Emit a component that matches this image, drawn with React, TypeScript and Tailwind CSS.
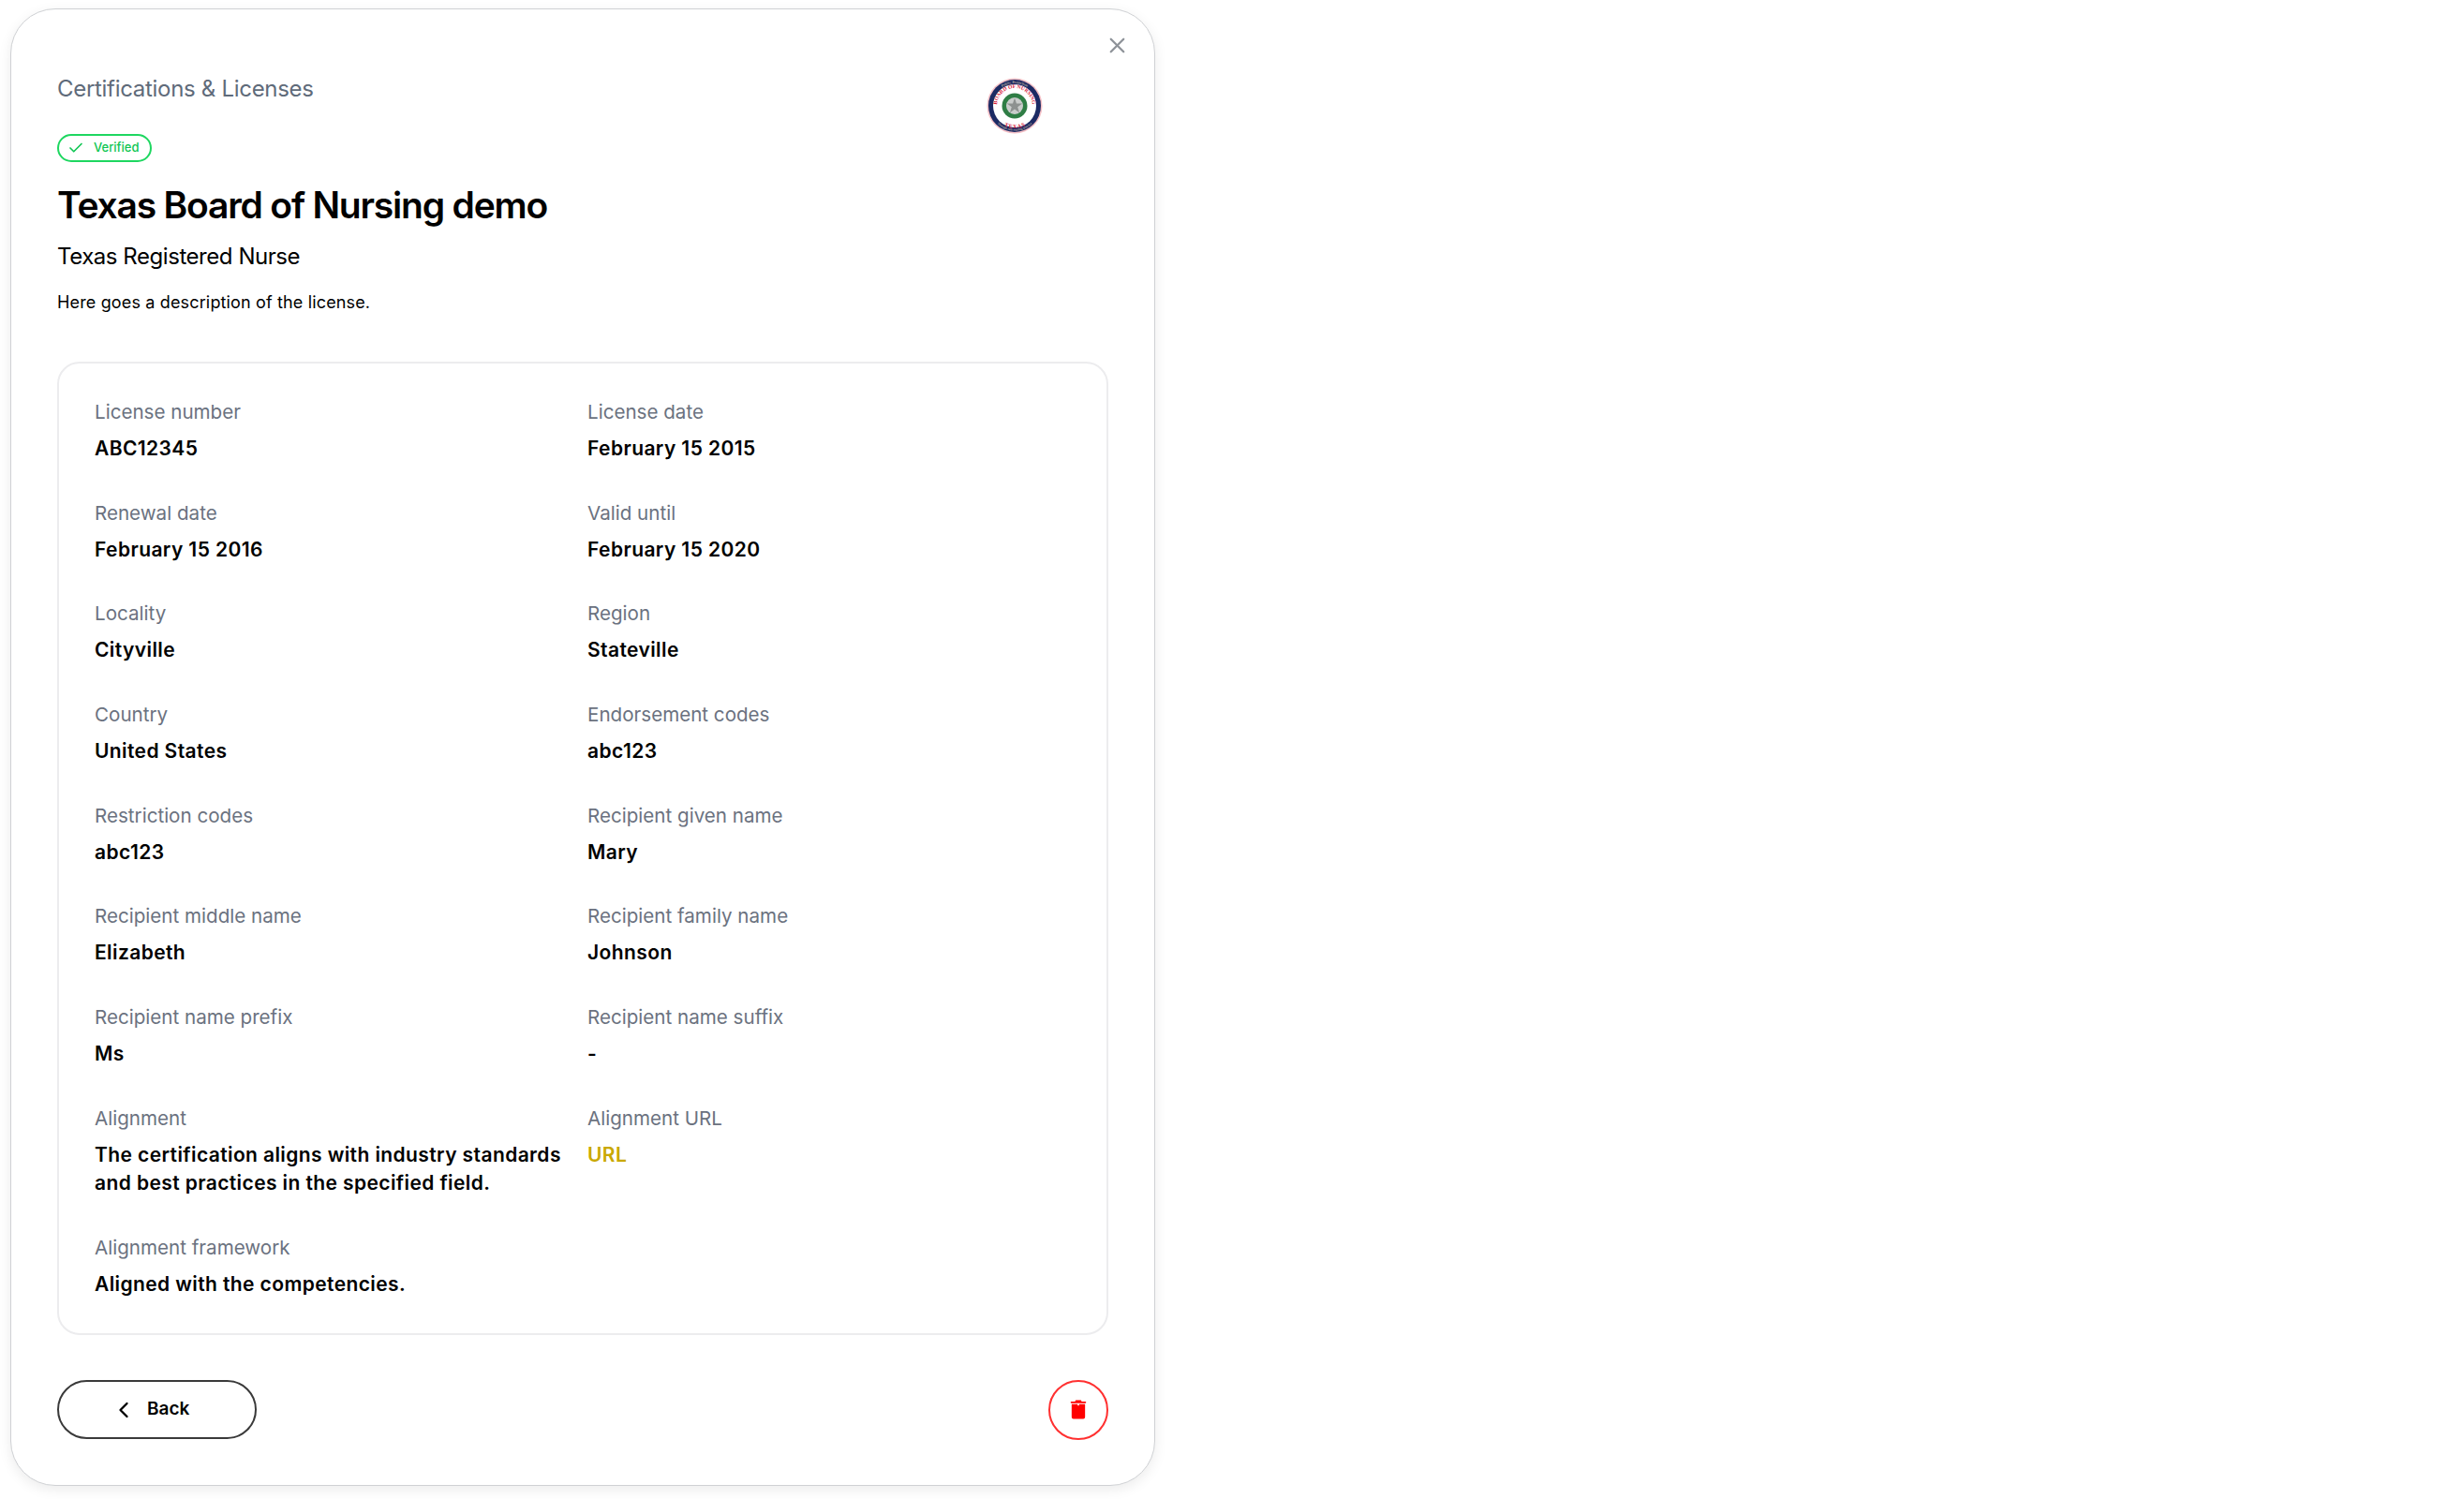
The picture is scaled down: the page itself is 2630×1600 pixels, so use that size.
import { X, Check, ChevronLeft } from 'lucide-react';

const fields: { label: string; value: string; link?: boolean }[] = [
  { label: 'License number', value: 'ABC12345' },
  { label: 'License date', value: 'February 15 2015' },
  { label: 'Renewal date', value: 'February 15 2016' },
  { label: 'Valid until', value: 'February 15 2020' },
  { label: 'Locality', value: 'Cityville' },
  { label: 'Region', value: 'Stateville' },
  { label: 'Country', value: 'United States' },
  { label: 'Endorsement codes', value: 'abc123' },
  { label: 'Restriction codes', value: 'abc123' },
  { label: 'Recipient given name', value: 'Mary' },
  { label: 'Recipient middle name', value: 'Elizabeth' },
  { label: 'Recipient family name', value: 'Johnson' },
  { label: 'Recipient name prefix', value: 'Ms' },
  { label: 'Recipient name suffix', value: '-' },
  { label: 'Alignment', value: 'The certification aligns with industry standards and best practices in the specified field.' },
  { label: 'Alignment URL', value: 'URL', link: true },
  { label: 'Alignment framework', value: 'Aligned with the competencies.' },
];

function Seal() {
  return (
    <svg viewBox="0 0 60 60" className="w-[60px] h-[60px] shrink-0">
      <defs>
        <path id="sealTop" d="M 6 30 A 24 24 0 0 1 54 30" />
        <path id="sealInner" d="M 11 30 A 19 19 0 0 1 49 30" />
        <path id="sealBottom" d="M 10 30 A 20 20 0 0 0 50 30" />
        <path id="sealFoot" d="M 3.5 30 A 26.5 26.5 0 0 0 56.5 30" />
      </defs>
      <circle cx="30" cy="30" r="29.5" fill="#f4c0c6" />
      <circle cx="30" cy="30" r="28" fill="#1c2a63" />
      <circle cx="30" cy="30" r="23" fill="#ffffff" />
      <text fontSize="4" fill="#e3dcb4" fontFamily="'Liberation Serif', serif">
        <textPath href="#sealTop" startOffset="50%" textAnchor="middle">Public Protection</textPath>
      </text>
      <text fontSize="3.4" fill="#e3dcb4" fontFamily="'Liberation Serif', serif">
        <textPath href="#sealFoot" startOffset="50%" textAnchor="middle">Through safe nursing practice</textPath>
      </text>
      <text fontSize="5.6" fontWeight="bold" fill="#d8203a" fontFamily="'Liberation Serif', serif">
        <textPath href="#sealInner" startOffset="50%" textAnchor="middle">BOARD OF NURSING</textPath>
      </text>
      <text fontSize="6" fontWeight="bold" fill="#d8203a" fontFamily="'Liberation Serif', serif">
        <textPath href="#sealBottom" startOffset="50%" textAnchor="middle" dominantBaseline="hanging">TEXAS</textPath>
      </text>
      <circle cx="30" cy="30" r="13.5" fill="#2f7d45" />
      <circle cx="30" cy="30" r="9" fill="#c9cccb" />
      <polygon
        points="30,21.5 32,27.5 38.2,27.5 33.2,31.2 35,37.2 30,33.5 25,37.2 26.8,31.2 21.8,27.5 28,27.5"
        fill="#8d9190"
      />
    </svg>
  );
}

function TrashIcon() {
  return (
    <svg viewBox="0 0 18 22" className="w-[18px] h-[21px]" fill="#ff0000">
      <path d="M6.5 0.5h5a1 1 0 0 1 1 1V2h4.2a0.8 0.8 0 0 1 0 2H1.3a0.8 0.8 0 0 1 0-2h4.2v-.5a1 1 0 0 1 1-1z" />
      <path d="M1.5 5h6.7v1.6h1.6V5h6.7v14.5a2 2 0 0 1-2 2h-11a2 2 0 0 1-2-2z" />
    </svg>
  );
}

export default function App() {
  return (
    <div className="min-h-[1600px] bg-white pt-[9px] pl-[11px] font-['Inter',sans-serif]">
      <div className="relative w-[1222px] h-[1577px] bg-white rounded-[48px] border border-[#cfd1d4] shadow-[0_4px_14px_rgba(0,0,0,0.08)] px-[49px] pt-[69px]">
        <button className="absolute top-[25px] right-[26px] text-[#8e9399]">
          <X size={27} strokeWidth={2} />
        </button>

        <div className="flex justify-between items-start">
          <div>
            <div className="text-[24px] leading-[32px] text-[#5f6b7a] tracking-[-0.3px]">Certifications &amp; Licenses</div>
            <div className="mt-[32px] flex items-center gap-[10px] w-[101px] h-[30px] pl-[9px] rounded-full border-2 border-[#1ed760] text-[#0fc653] text-[13px] font-medium">
              <Check size={18} strokeWidth={2.2} />
              <span>Verified</span>
            </div>
            <h1 className="mt-[21px] text-[39px] leading-[50px] font-semibold text-black tracking-[-1.2px]">Texas Board of Nursing demo</h1>
            <p className="mt-[14px] text-[24px] leading-[32px] text-black tracking-[-0.45px]">Texas Registered Nurse</p>
            <p className="mt-[18px] text-[18px] leading-[30px] text-black tracking-[0.15px]">Here goes a description of the license.</p>
          </div>
          <div className="mr-[70px] mt-[4px]">
            <Seal />
          </div>
        </div>

        <div className="mt-[48px] border-2 border-[#ececee] rounded-[24px] pt-[37px] pb-[37px] pl-[38px] pr-[36px] grid grid-cols-2 gap-x-2 gap-y-[38.7px]">
          {fields.map((f) => (
            <div key={f.label}>
              <div className="text-[20.6px] leading-[30px] text-[#6b7280] mb-[9px]">{f.label}</div>
              <div className={`text-[21px] leading-[30px] font-semibold tracking-[0.4px] ${f.link ? 'text-[#c9a800]' : 'text-black'}`}>{f.value}</div>
            </div>
          ))}
        </div>

        <div className="mt-[48px] flex justify-between items-center">
          <button className="w-[213px] h-[63px] rounded-full border-2 border-[#3a3a3a] flex items-center pl-[55px] gap-[11px] text-[19px] font-semibold text-black">
            <ChevronLeft size={28} strokeWidth={2} />
            <span>Back</span>
          </button>
          <button className="w-[64px] h-[64px] rounded-full border-2 border-[#ff3030] flex items-center justify-center">
            <TrashIcon />
          </button>
        </div>
      </div>
    </div>
  );
}
